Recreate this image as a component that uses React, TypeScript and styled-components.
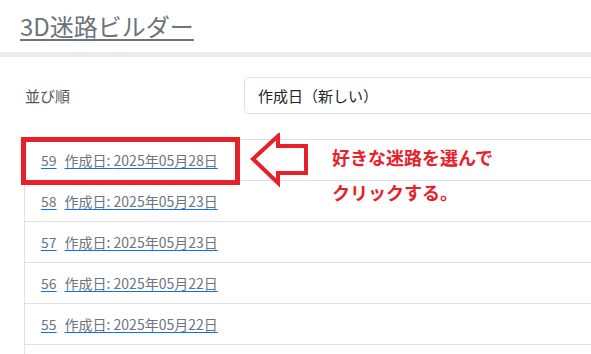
import React from 'react'
import styled, { createGlobalStyle } from 'styled-components'

const GlobalStyle = createGlobalStyle`
  body {
    margin: 0;
    background: #fff;
    font-family: "Noto Sans CJK JP", "Noto Sans", sans-serif;
  }
`

const Page = styled.div`
  height: 100vh;
  overflow: hidden;
`

const Header = styled.header`
  height: 52px;
  padding-left: 20px;
  display: flex;
  align-items: center;
  border-bottom: 5px solid #ececec;
`

const Title = styled.a`
  font-size: 24px;
  color: #6c737a;
  text-decoration: underline;
  text-decoration-thickness: 2px;
  text-underline-offset: 3px;
  line-height: 1;
`

const Main = styled.main`
  position: relative;
  padding: 20px 0 0 24px;
`

const SortRow = styled.div`
  display: flex;
  align-items: center;
  height: 37px;
`

const SortLabel = styled.label`
  width: 219px;
  padding-left: 1px;
  font-size: 15px;
  color: #555;
`

const SelectBox = styled.div`
  flex: 1;
  height: 37px;
  box-sizing: border-box;
  border: 1px solid #dee2e6;
  border-right: none;
  border-radius: 5px 0 0 5px;
  display: flex;
  align-items: center;
  padding-left: 13px;
  font-size: 15px;
  color: #212529;
`

const List = styled.ul`
  list-style: none;
  margin: 25px 0 0;
  padding: 0;
  border-left: 1px solid #dee2e6;
`

const Row = styled.li`
  height: 40px;
  border-top: 1px solid #dee2e6;
  display: flex;
  align-items: center;
  padding-left: 16px;
  font-size: 14px;
`

const RowLink = styled.a`
  color: #6c757d;
  text-decoration: underline;
  text-decoration-color: #0d6efd;
  text-underline-offset: 2px;
  margin-right: 8px;
`

const Highlight = styled.div`
  position: absolute;
  left: 21px;
  top: 80px;
  width: 219px;
  height: 48px;
  box-sizing: border-box;
  border: 5px solid #e8202a;
`

const Arrow = styled.svg`
  position: absolute;
  left: 250px;
  top: 76px;
`

const Callout = styled.div`
  position: absolute;
  left: 332px;
  top: 83px;
  color: #e8202a;
  font-size: 18px;
  font-weight: bold;
  line-height: 35px;
`

const rows = [
  { id: 59, date: '2025年05月28日' },
  { id: 58, date: '2025年05月23日' },
  { id: 57, date: '2025年05月23日' },
  { id: 56, date: '2025年05月22日' },
  { id: 55, date: '2025年05月22日' },
]

export default function App() {
  return (
    <Page>
      <GlobalStyle />
      <Header>
        <Title>3D迷路ビルダー</Title>
      </Header>
      <Main>
        <SortRow>
          <SortLabel>並び順</SortLabel>
          <SelectBox>作成日（新しい）</SelectBox>
        </SortRow>
        <List>
          {rows.map((r) => (
            <Row key={r.id}>
              <RowLink>{r.id}</RowLink>
              <RowLink>作成日: {r.date}</RowLink>
            </Row>
          ))}
          <Row />
        </List>
        <Highlight />
        <Arrow width="60" height="54" viewBox="0 0 60 54">
          <path
            d="M3 26 L28 3 L28 13 L56 13 L56 40 L28 40 L28 50 Z"
            fill="none"
            stroke="#e8202a"
            strokeWidth="4"
            strokeLinejoin="miter"
          />
        </Arrow>
        <Callout>
          好きな迷路を選んで
          <br />
          クリックする。
        </Callout>
      </Main>
    </Page>
  )
}
